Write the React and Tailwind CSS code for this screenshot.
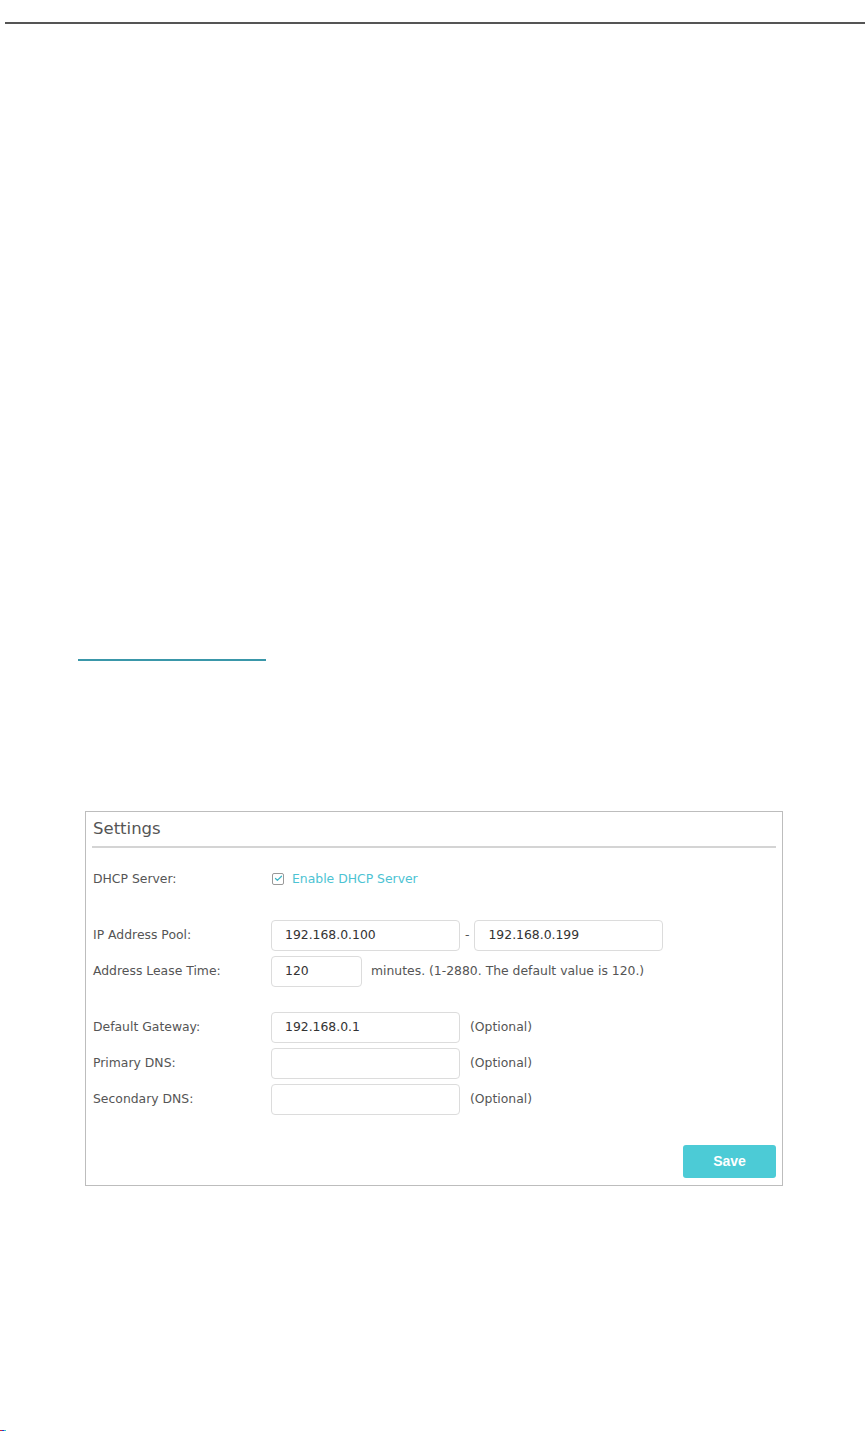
import { Check } from 'lucide-react';

const font = { fontFamily: '"DejaVu Sans", Verdana, sans-serif' };

// Single labelled row in the settings form
function Row({ label, children, className = '' }) {
  return (
    <div className={`flex items-center ${className}`}>
      <div className="w-[178px] shrink-0 text-[12.4px] text-[#555]">{label}</div>
      <div className="flex items-center">{children}</div>
    </div>
  );
}

function Field({ value = '', width = 'w-[189px]' }) {
  return (
    <div
      className={`${width} h-[31px] border border-[#dcdcdc] rounded-[4px] bg-white flex items-center pl-[13px] text-[12.4px] text-[#333]`}
    >
      {value}
    </div>
  );
}

export default function App() {
  return (
    <div className="relative w-[867px] h-[1431px] bg-white" style={font}>
      {/* header rule */}
      <div className="pt-[22px] pl-[5px] pr-[2px]">
        <div className="h-[2px] bg-[#555]" />
      </div>

      {/* link underline */}
      <div className="mt-[635px] ml-[78px] w-[188px] h-[2px] bg-[#3a97a9]" />

      {/* Settings panel */}
      <div className="mt-[150px] ml-[85px] w-[698px] h-[375px] border border-[#bdbdbd] bg-white">
        <div className="px-[6px]">
          <div className="pt-[6px] pl-[1px] text-[16.5px] leading-[22px] text-[#555]">Settings</div>
          <div className="mt-[6px] h-[2px] bg-[#d4d4d4]" />
        </div>

        <div className="pl-[7px]">
          <Row label="DHCP Server:" className="mt-[21px] h-[20px]">
            <div className="ml-[1px] w-[12px] h-[12px] border border-[#999] rounded-[2px] flex items-center justify-center">
              <Check className="w-[9px] h-[9px] text-[#3fb6c6]" strokeWidth={3.5} />
            </div>
            <span className="ml-[8px] text-[12.4px] text-[#4cc3d3]">Enable DHCP Server</span>
          </Row>

          <Row label="IP Address Pool:" className="mt-[31px]">
            <Field value="192.168.0.100" />
            <span className="mx-[5px] text-[12.4px] text-[#555]">-</span>
            <Field value="192.168.0.199" />
          </Row>

          <Row label="Address Lease Time:" className="mt-[5px]">
            <Field value="120" width="w-[91px]" />
            <span className="ml-[9px] text-[12.4px] text-[#555]">
              minutes. (1-2880. The default value is 120.)
            </span>
          </Row>

          <Row label="Default Gateway:" className="mt-[25px]">
            <Field value="192.168.0.1" />
            <span className="ml-[10px] text-[12.4px] text-[#555]">(Optional)</span>
          </Row>

          <Row label="Primary DNS:" className="mt-[5px]">
            <Field />
            <span className="ml-[10px] text-[12.4px] text-[#555]">(Optional)</span>
          </Row>

          <Row label="Secondary DNS:" className="mt-[5px]">
            <Field />
            <span className="ml-[10px] text-[12.4px] text-[#555]">(Optional)</span>
          </Row>
        </div>

        <div className="mt-[30px] pr-[6px] flex justify-end">
          <button
            className="w-[93px] h-[33px] rounded-[3px] bg-[#4ccbd6] text-white text-[14px] font-bold"
            style={{ fontFamily: '"Liberation Sans", Arial, sans-serif' }}
          >
            Save
          </button>
        </div>
      </div>

      {/* tiny corner mark */}
      <div className="absolute left-0 bottom-0 flex h-[1px]">
        <div className="w-[2px] bg-[#c33]" />
        <div className="w-[2px] bg-[#33c]" />
        <div className="w-[2px] bg-[#3cc]" />
      </div>
    </div>
  );
}
